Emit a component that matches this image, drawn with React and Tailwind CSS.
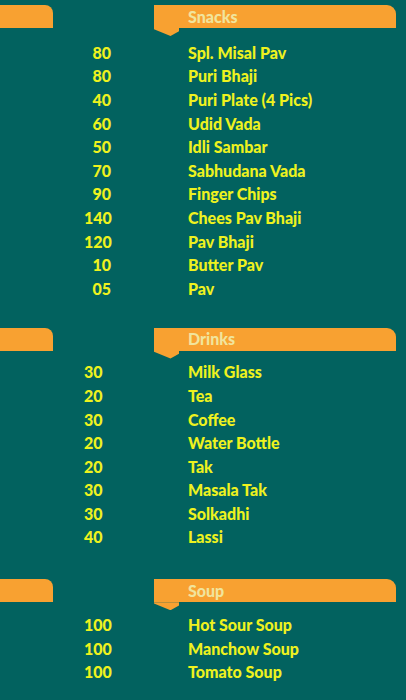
import React from "react";

const sections = [
  {
    title: "Snacks",
    align: "right",
    mt: "mt-[5px]",
    listMt: "mt-[13px]",
    items: [
      ["80", "Spl. Misal Pav"],
      ["80", "Puri Bhaji"],
      ["40", "Puri Plate (4 Pics)"],
      ["60", "Udid Vada"],
      ["50", "Idli Sambar"],
      ["70", "Sabhudana Vada"],
      ["90", "Finger Chips"],
      ["140", "Chees Pav Bhaji"],
      ["120", "Pav Bhaji"],
      ["10", "Butter Pav"],
      ["05", "Pav"],
    ],
  },
  {
    title: "Drinks",
    align: "left",
    mt: "mt-[27px]",
    listMt: "mt-[10px]",
    items: [
      ["30", "Milk Glass"],
      ["20", "Tea"],
      ["30", "Coffee"],
      ["20", "Water Bottle"],
      ["20", "Tak"],
      ["30", "Masala Tak"],
      ["30", "Solkadhi"],
      ["40", "Lassi"],
    ],
  },
  {
    title: "Soup",
    align: "left",
    mt: "mt-[30px]",
    listMt: "mt-[11px]",
    items: [
      ["100", "Hot Sour Soup"],
      ["100", "Manchow Soup"],
      ["100", "Tomato Soup"],
    ],
  },
];

function Header({ title }) {
  return (
    <div className="flex h-[23px] items-stretch">
      <div className="w-[53px] rounded-tr-[8px] bg-[#F8A131]" />
      <div className="relative ml-[101px] mr-[10px] flex flex-1 items-center rounded-tr-[9px] bg-[#F8A131] pl-[34px]">
        <span className="text-[16px] font-black leading-none text-[#F1E49C]">{title}</span>
        <div className="absolute left-0 top-full h-[8px] w-[25px] bg-[#F8A131] [clip-path:polygon(0_0,100%_0,100%_40%,66%_100%,0_15%)]" />
      </div>
    </div>
  );
}

export default function App() {
  return (
    <div
      className="h-[700px] w-[406px] overflow-hidden bg-[#02625F]"
      style={{ fontFamily: "Lato, 'Open Sans', sans-serif" }}
    >
      {sections.map((s) => (
        <div key={s.title} className={s.mt}>
          <Header title={s.title} />
          <div className={s.listMt}>
            {s.items.map(([price, name]) => (
              <div key={name} className="flex h-[23.6px] items-center text-[16px] font-black text-[#EEF21E]">
                <div
                  className={
                    "ml-[84px] w-[27px] whitespace-nowrap " +
                    (s.align === "right" ? "text-right" : "text-left")
                  }
                >
                  {price}
                </div>
                <div className="ml-[77px] whitespace-nowrap">{name}</div>
              </div>
            ))}
          </div>
        </div>
      ))}
    </div>
  );
}
